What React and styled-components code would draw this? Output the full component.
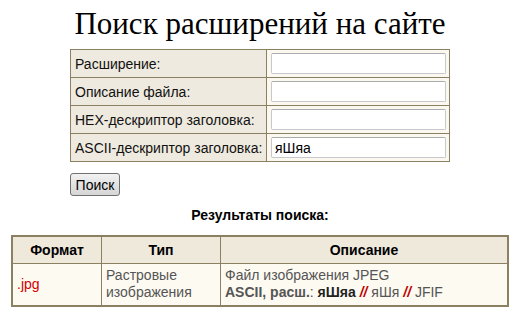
import React from "react";
import styled, { createGlobalStyle } from "styled-components";

const Global = createGlobalStyle`
  html, body { margin: 0; padding: 0; background: #fff; }
  body { font-family: "Liberation Sans", Arial, sans-serif; font-size: 14px; color: #000; }
`;

const Page = styled.div`
  padding: 0 8px;
  display: flex;
  flex-direction: column;
  align-items: center;
`;

const Title = styled.h1`
  font-family: "Liberation Serif", "Times New Roman", serif;
  font-weight: normal;
  font-size: 31px;
  line-height: 36px;
  margin: 6px 0 7px;
`;

const Form = styled.form`
  width: 380px;
  display: flex;
  flex-direction: column;
  align-items: flex-start;
`;

const FormTable = styled.table`
  width: 380px;
  border-collapse: collapse;
  border: 1px solid #8b8062;
`;

const LabelCell = styled.td`
  background: #efeadf;
  border: 1px solid #8b8062;
  height: 27px;
  padding: 0 3px 0 4px;
  font-size: 14px;
  color: #111;
  white-space: nowrap;
`;

const InputCell = styled.td`
  background: #fbf8f0;
  border: 1px solid #8b8062;
  padding: 0 3px 0 4px;
  width: 175px;
`;

const Input = styled.input`
  box-sizing: border-box;
  width: 175px;
  height: 21px;
  border: 1px solid #c6c8cc;
  border-top-color: #a9abaf;
  border-radius: 2px;
  background: #fff;
  font-family: "Liberation Sans", Arial, sans-serif;
  font-size: 14px;
  padding: 1px 3px;
  display: block;
  outline: none;
`;

const Button = styled.button`
  margin-top: 11px;
  height: 23px;
  width: 50px;
  padding: 0 3px;
  font-family: "Liberation Sans", Arial, sans-serif;
  font-size: 14px;
  color: #000;
  border: 1px solid #707070;
  border-radius: 3px;
  background: linear-gradient(#f2f2f2, #e2e2e2 50%, #d6d6d6);
`;

const ResultsTitle = styled.div`
  font-weight: bold;
  font-size: 14px;
  margin: 11px 0 12px;
`;

const ResultsTable = styled.table`
  width: 498px;
  border-collapse: collapse;
  border: 2px solid #8b8062;
`;

const Th = styled.th`
  background: #efe9dc;
  border: 1px solid #8b8062;
  height: 26px;
  padding: 0 4px;
  font-size: 14px;
  font-weight: bold;
  width: ${(p) => p.$w || "auto"};
`;

const Td = styled.td`
  background: #fdfaf2;
  border: 1px solid #8b8062;
  padding: 3px 4px 4px;
  font-size: 14px;
  line-height: 17px;
  color: #555;
  vertical-align: ${(p) => (p.$middle ? "middle" : "top")};
`;

const Ext = styled.span`
  color: #d40000;
`;

const B = styled.b`
  color: ${(p) => (p.$dark ? "#222" : "#555")};
`;

const Sep = styled.b`
  color: #c00000;
  font-style: italic;
`;

const fields = [
  ["Расширение:", ""],
  ["Описание файла:", ""],
  ["HEX-дескриптор заголовка:", ""],
  ["ASCII-дескриптор заголовка:", "яШяа"],
];

export default function App() {
  return (
    <>
      <Global />
      <Page>
        <Title>Поиск расширений на сайте</Title>
        <Form onSubmit={(e) => e.preventDefault()}>
          <FormTable>
            <tbody>
              {fields.map(([label, value]) => (
                <tr key={label}>
                  <LabelCell>{label}</LabelCell>
                  <InputCell>
                    <Input defaultValue={value} />
                  </InputCell>
                </tr>
              ))}
            </tbody>
          </FormTable>
          <Button type="submit">Поиск</Button>
        </Form>
        <ResultsTitle>Результаты поиска:</ResultsTitle>
        <ResultsTable>
          <thead>
            <tr>
              <Th $w="80px">Формат</Th>
              <Th $w="110px">Тип</Th>
              <Th>Описание</Th>
            </tr>
          </thead>
          <tbody>
            <tr>
              <Td $middle><Ext>.jpg</Ext></Td>
              <Td>Растровые<br />изображения</Td>
              <Td>
                Файл изображения JPEG
                <br />
                <B>ASCII, расш.</B>: <B $dark>яШяа</B> <Sep>//</Sep> яШя <Sep>//</Sep> JFIF
              </Td>
            </tr>
          </tbody>
        </ResultsTable>
      </Page>
    </>
  );
}
